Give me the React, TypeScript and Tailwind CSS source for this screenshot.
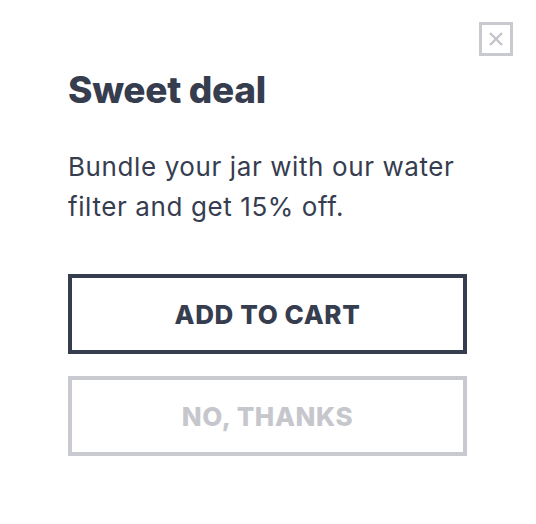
import React from "react";

export default function App() {
  return (
    <div className="relative w-[536px] h-[524px] bg-white" style={{ fontFamily: "Inter, 'Noto Sans', sans-serif" }}>
      <button className="absolute top-[22px] left-[479px] w-[34px] h-[34px] border-[3px] border-[#c9cacf] flex items-center justify-center bg-white">
        <svg width="16" height="16" viewBox="0 0 16 16" fill="none">
          <path d="M2 2 L14 14 M14 2 L2 14" stroke="#c3c4ca" strokeWidth="2.4" />
        </svg>
      </button>
      <div className="flex flex-col pl-[68px] pt-[68px] w-[420px] box-content">
        <h1 className="text-[37px] leading-[44px] font-extrabold text-[#363d4f] tracking-[-0.3px]">Sweet deal</h1>
        <p className="mt-[35px] w-[400px] text-[26px] leading-[40px] text-[#363d4f] tracking-[0.6px]">
          Bundle your jar with our water filter and get 15% off.
        </p>
        <button className="mt-[47px] h-[80px] w-[399px] border-4 border-[#363d4f] bg-white text-[26px] font-extrabold text-[#363d4f] flex items-center justify-center tracking-[0.6px]">
          ADD TO CART
        </button>
        <button className="mt-[22px] h-[80px] w-[399px] border-4 border-[#c9cacf] bg-white text-[26px] font-extrabold text-[#c6c7cd] flex items-center justify-center tracking-[0.6px]">
          NO, THANKS
        </button>
      </div>
    </div>
  );
}
